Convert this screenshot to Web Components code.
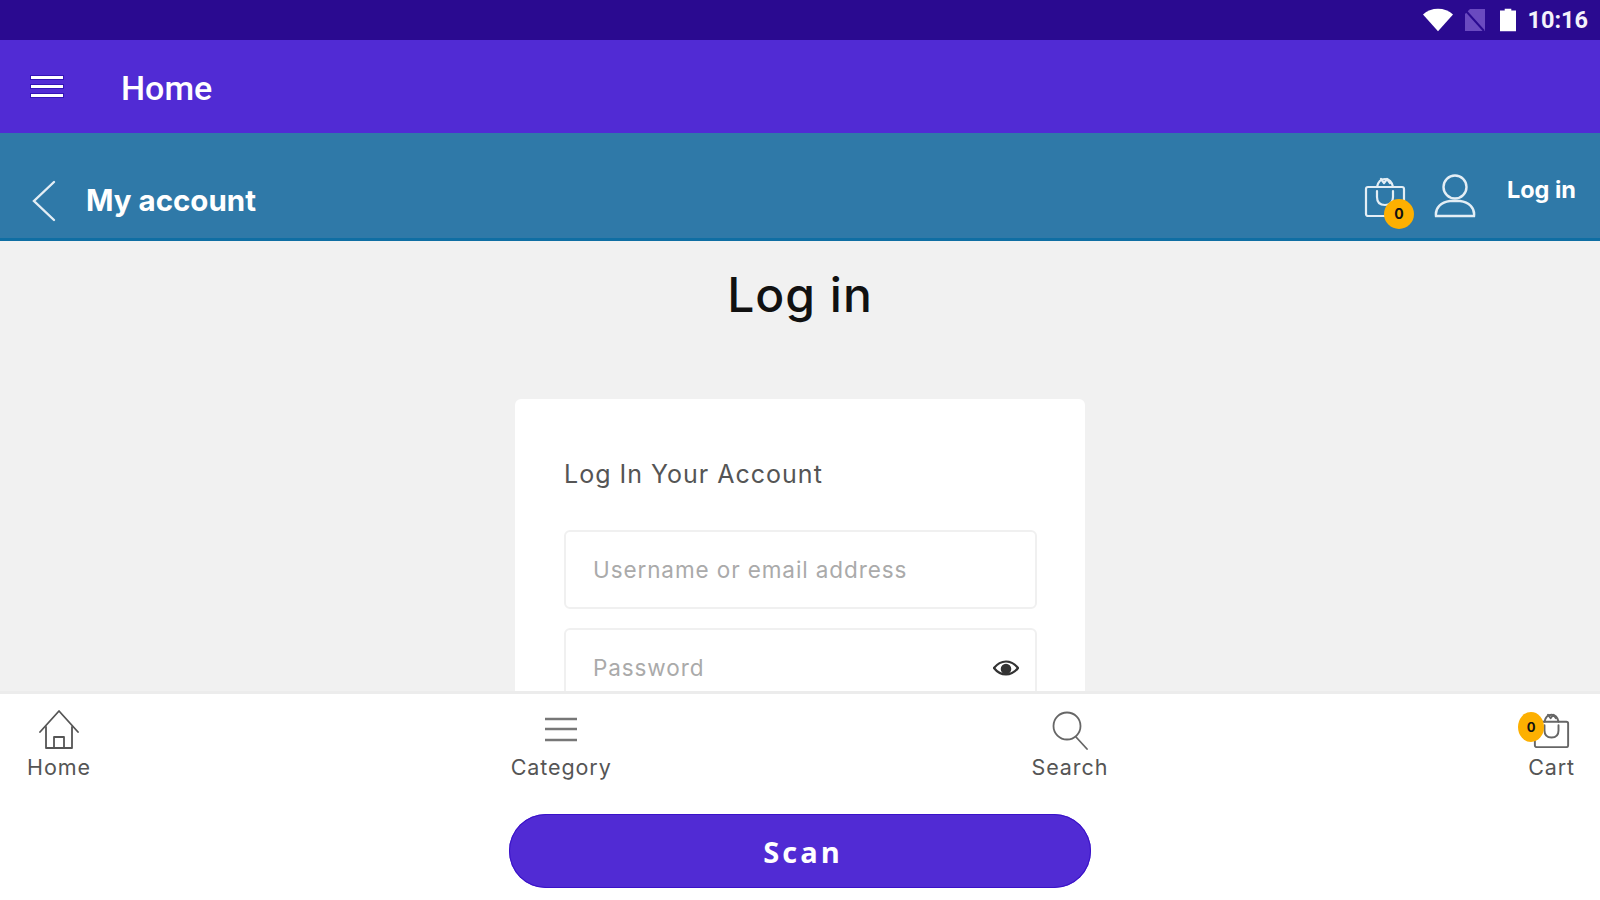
<!DOCTYPE html>
<html lang="en">
<head>
<meta charset="utf-8">
<title>Log in</title>
<style>
    html, body { margin: 0; height: 100%; }
    body {
        width: 1600px;
        height: 900px;
        overflow: hidden;
        display: flex;
        flex-direction: column;
        font-family: "Inter", "Liberation Sans", sans-serif;
        background: #f1f1f1;
    }
</style>
</head>
<body>
<status-bar>10:16</status-bar>
<top-bar>Home</top-bar>
<account-bar>My account</account-bar>
<login-page heading="Log in">
    <login-card heading="Log In Your Account">
        <form-field>Username or email address</form-field>
        <form-field eye>Password</form-field>
    </login-card>
</login-page>
<bottom-panel>
    <nav-item icon="home">Home</nav-item>
    <nav-item icon="menu">Category</nav-item>
    <nav-item icon="search">Search</nav-item>
    <nav-item icon="cart">Cart</nav-item>
    <scan-button slot="action">Scan</scan-button>
</bottom-panel>

<script>
const bagIcon = (stroke, w = 42, h = 40) => `
    <svg viewBox="0 0 42 40" width="${w}" height="${h}" fill="none" stroke="${stroke}" stroke-width="2.2" stroke-linejoin="round" stroke-linecap="round">
        <rect x="2" y="10" width="38" height="29" rx="2"/>
        <path d="M13 10c1-5 4-8 8-8s7 3 8 8"/>
        <path d="M17 2l3 4 3-4 3 4"/>
        <path d="M13 14v6c0 5 3 8 8 8s8-3 8-8v-6"/>
    </svg>`;

const navIcons = {
    home: `<svg viewBox="0 0 40 40" width="40" height="40" fill="none" stroke="#555" stroke-width="1.8" stroke-linecap="round" stroke-linejoin="round">
        <path d="M1 22L20 1l19 21"/><path d="M7 17v21h26V17"/><path d="M15 38V27h10v11"/></svg>`,
    menu: `<svg viewBox="0 0 36 30" width="36" height="30" fill="none" stroke="#777" stroke-width="2.4">
        <path d="M2 4h32M2 14h32M2 25h32"/></svg>`,
    search: `<svg viewBox="0 0 36 40" width="36" height="40" fill="none" stroke="#666" stroke-width="1.8" stroke-linecap="round">
        <circle cx="15" cy="16" r="13.5"/><path d="M24 27l11 12"/></svg>`,
    cart: bagIcon("#666", 37, 35)
};

class StatusBar extends HTMLElement {
    constructor() {
        super();
        this.attachShadow({ mode: 'open' }).innerHTML = `
        <style>
            :host {
                display: flex;
                align-items: center;
                justify-content: flex-end;
                flex: none;
                height: 40px;
                box-sizing: border-box;
                padding-right: 12px;
                background: #2a0a90;
                color: #f4f2fb;
                font: 700 23.5px "Roboto", sans-serif;
            }
            svg { display: block; }
            .wifi { margin-right: 12px; }
            .sim { margin-right: 15px; }
            .battery { margin-right: 11px; }
        </style>
        <svg class="wifi" width="30" height="24" viewBox="0 0 32 24"><path d="M0 6C8-2 24-2 32 6L16 24z" fill="#fff"/></svg>
        <svg class="sim" width="20" height="22" viewBox="0 0 20 22"><path d="M5 0h15v22H0V5z" fill="#6a4ac0"/><path d="M1 2l18 20" stroke="#2a0a90" stroke-width="2"/></svg>
        <svg class="battery" width="16" height="24" viewBox="0 0 17 24"><path d="M5 0h7v2h5v22H0V2h5z" fill="#fff"/></svg>
        <span><slot></slot></span>`;
    }
}

class TopBar extends HTMLElement {
    constructor() {
        super();
        this.attachShadow({ mode: 'open' }).innerHTML = `
        <style>
            :host {
                display: flex;
                align-items: center;
                flex: none;
                height: 93px;
                box-sizing: border-box;
                padding-left: 31px;
                background: #512bd4;
                color: #fff;
                font: 500 34px "Roboto", sans-serif;
            }
            .burger {
                display: flex;
                flex-direction: column;
                gap: 6px;
                width: 32px;
                margin-right: 58px;
            }
            .burger i {
                display: block;
                height: 3px;
                background: #fff;
                box-shadow: 0 0 0 1px #3413b8;
            }
            span { position: relative; top: 1px; }
        </style>
        <div class="burger"><i></i><i></i><i></i></div>
        <span><slot></slot></span>`;
    }
}

class AccountBar extends HTMLElement {
    constructor() {
        super();
        this.attachShadow({ mode: 'open' }).innerHTML = `
        <style>
            :host {
                display: flex;
                align-items: center;
                flex: none;
                height: 108px;
                box-sizing: border-box;
                padding: 0 24px 0 32px;
                background: #2f79a8;
                border-bottom: 3px solid #0f6ea3;
                color: #fff;
            }
            .back { margin-right: 30px; display: block; margin-top: 31px; }
            .title {
                font: 700 29.5px "Inter", sans-serif;
                flex: 1;
                margin-top: 29px;
            }
            .bag { position: relative; margin-top: 22px; margin-right: 28px; }
            .bag svg, .user { display: block; }
            .badge {
                position: absolute;
                left: 20px;
                top: 22px;
                width: 30px;
                height: 30px;
                border-radius: 50%;
                background: #fdb001;
                color: #111;
                font: 700 14px/30px "Inter", sans-serif;
                text-align: center;
            }
            .user { margin-top: 21px; margin-right: 31px; }
            .login { font: 700 23.5px "Inter", sans-serif; margin-top: 8px; }
        </style>
        <svg class="back" width="24" height="42" viewBox="0 0 24 42" fill="none" stroke="#e4eef5" stroke-width="2.4" stroke-linecap="round"><path d="M22 2L2 21l20 19"/></svg>
        <div class="title"><slot></slot></div>
        <div class="bag">${bagIcon("#e4eef5")}<span class="badge">0</span></div>
        <svg class="user" width="42" height="44" viewBox="0 0 42 44" fill="none" stroke="#e4eef5" stroke-width="2.4">
            <circle cx="21" cy="13" r="11.5"/>
            <path d="M2 42c-1-8 5-14 14-15h10c9 1 15 7 14 15z"/>
        </svg>
        <div class="login">Log in</div>`;
    }
}

class LoginPage extends HTMLElement {
    constructor() {
        super();
        this.attachShadow({ mode: 'open' }).innerHTML = `
        <style>
            :host {
                display: flex;
                flex-direction: column;
                align-items: center;
                flex: none;
                height: 450px;
                overflow: hidden;
                background: #f1f1f1;
            }
            h1 {
                flex: none;
                margin: 24px 0 0;
                height: 134px;
                font: 500 48px/60px "Inter", sans-serif;
                letter-spacing: 1px;
                color: #111;
            }
        </style>
        <h1></h1>
        <slot></slot>`;
    }
    connectedCallback() {
        this.shadowRoot.querySelector('h1').textContent = this.getAttribute('heading');
    }
}

class LoginCard extends HTMLElement {
    constructor() {
        super();
        this.attachShadow({ mode: 'open' }).innerHTML = `
        <style>
            :host {
                display: flex;
                flex-direction: column;
                gap: 19px;
                flex: none;
                width: 570px;
                box-sizing: border-box;
                padding: 0 48px 0 49px;
                background: #fff;
                border-radius: 6px;
                height: 400px;
            }
            h2 {
                margin: 57px 0 19px;
                height: 36px;
                font: 400 25px/36px "Inter", sans-serif;
                letter-spacing: 1px;
                color: #555;
            }
        </style>
        <h2></h2>
        <slot></slot>`;
    }
    connectedCallback() {
        this.shadowRoot.querySelector('h2').textContent = this.getAttribute('heading');
    }
}

class FormField extends HTMLElement {
    constructor() {
        super();
        this.attachShadow({ mode: 'open' }).innerHTML = `
        <style>
            :host {
                display: flex;
                align-items: center;
                justify-content: space-between;
                flex: none;
                height: 79px;
                box-sizing: border-box;
                padding: 0 16px 0 27px;
                border: 2px solid #f0f0f0;
                border-radius: 6px;
                font: 400 22.5px "Inter", sans-serif;
                letter-spacing: .9px;
                color: #aaa;
            }
            svg { display: none; }
            :host([eye]) svg { display: block; }
        </style>
        <span><slot></slot></span>
        <svg width="26" height="18" viewBox="0 0 28 18" fill="none" stroke="#333" stroke-width="2.4">
            <path d="M1 9c4-5 8-7 13-7s9 2 13 7c-4 5-8 7-13 7S5 14 1 9z"/>
            <circle cx="14" cy="10" r="4.5" fill="#333"/>
        </svg>`;
    }
}

class BottomPanel extends HTMLElement {
    constructor() {
        super();
        this.attachShadow({ mode: 'open' }).innerHTML = `
        <style>
            :host {
                display: flex;
                flex-direction: column;
                align-items: center;
                flex: 1;
                background: #fff;
                border-top: 3px solid #ececec;
            }
            nav {
                display: flex;
                justify-content: space-between;
                align-items: flex-start;
                align-self: stretch;
                box-sizing: border-box;
                height: 120px;
                padding: 16px 25px 0 27px;
            }
        </style>
        <nav><slot></slot></nav>
        <slot name="action"></slot>`;
    }
}

class NavItem extends HTMLElement {
    constructor() {
        super();
        this.attachShadow({ mode: 'open' }).innerHTML = `
        <style>
            :host {
                display: flex;
                flex-direction: column;
                align-items: center;
                font: 400 21.5px/26px "Inter", sans-serif;
                letter-spacing: .9px;
                color: #555;
            }
            .icon {
                position: relative;
                display: flex;
                align-items: center;
                justify-content: center;
                height: 40px;
                margin-bottom: 4px;
            }
            .badge {
                position: absolute;
                left: -15px;
                top: 2px;
                width: 26px;
                height: 30px;
                border-radius: 50%;
                background: #fdb001;
                color: #111;
                font: 700 13px/30px "Inter", sans-serif;
                letter-spacing: 0;
                text-align: center;
            }
            svg { display: block; }
        </style>
        <div class="icon"></div>
        <span><slot></slot></span>`;
    }
    connectedCallback() {
        const name = this.getAttribute('icon');
        let html = navIcons[name];
        if (name === 'cart') html += '<span class="badge">0</span>';
        this.shadowRoot.querySelector('.icon').innerHTML = html;
    }
}

class ScanButton extends HTMLElement {
    constructor() {
        super();
        this.attachShadow({ mode: 'open' }).innerHTML = `
        <style>
            :host {
                display: flex;
                align-items: center;
                justify-content: center;
                width: 582px;
                height: 74px;
                box-sizing: border-box;
                padding-left: 6px;
                border-radius: 37px;
                background: #512bd4;
                box-shadow: inset 0 0 0 1px #3a12c8;
                color: #fff;
                font: 700 29px "Open Sans", sans-serif;
                letter-spacing: 3px;
            }
        </style>
        <slot></slot>`;
    }
}

customElements.define('status-bar', StatusBar);
customElements.define('top-bar', TopBar);
customElements.define('account-bar', AccountBar);
customElements.define('login-page', LoginPage);
customElements.define('login-card', LoginCard);
customElements.define('form-field', FormField);
customElements.define('bottom-panel', BottomPanel);
customElements.define('nav-item', NavItem);
customElements.define('scan-button', ScanButton);
</script>
</body>
</html>
